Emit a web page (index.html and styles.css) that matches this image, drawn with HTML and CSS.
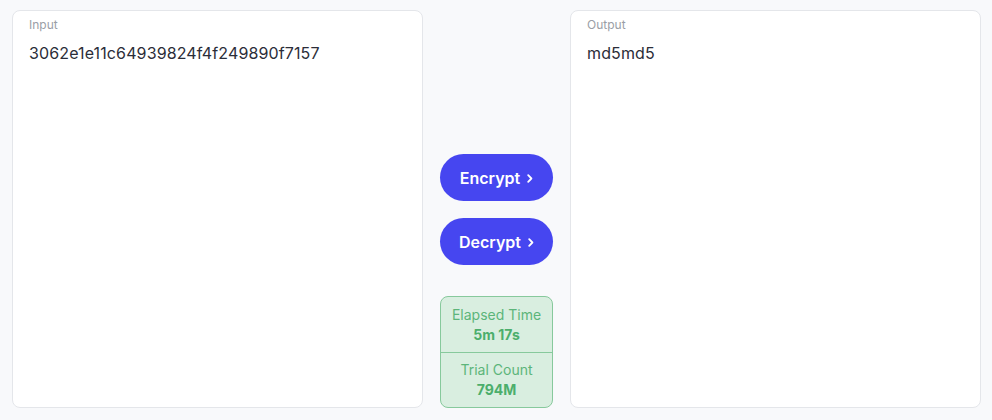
FILE: index.html
```html
<!DOCTYPE html>
<html>
<head>
<meta charset="utf-8">
<link rel="stylesheet" href="styles.css">
</head>
<body>
<div class="app">
  <div class="panel">
    <div class="label">Input</div>
    <div class="value">3062e1e11c64939824f4f249890f7157</div>
  </div>
  <div class="middle">
    <button class="btn">Encrypt<svg class="chev" width="6" height="9" viewBox="0 0 6 9"><path d="M1.2 1.2 L4.4 4.5 L1.2 7.8" fill="none" stroke="#fff" stroke-width="1.8" stroke-linecap="round" stroke-linejoin="round"/></svg></button>
    <button class="btn">Decrypt<svg class="chev" width="6" height="9" viewBox="0 0 6 9"><path d="M1.2 1.2 L4.4 4.5 L1.2 7.8" fill="none" stroke="#fff" stroke-width="1.8" stroke-linecap="round" stroke-linejoin="round"/></svg></button>
    <div class="stats">
      <div class="stat">
        <div class="stat-label">Elapsed Time</div>
        <div class="stat-value">5m 17s</div>
      </div>
      <div class="stat">
        <div class="stat-label">Trial Count</div>
        <div class="stat-value">794M</div>
      </div>
    </div>
  </div>
  <div class="panel">
    <div class="label">Output</div>
    <div class="value">md5md5</div>
  </div>
</div>
</body>
</html>
```
FILE: styles.css
```css
html, body {
  margin: 0;
  padding: 0;
  background: #f8f9fb;
  font-family: "Inter", "Noto Sans", sans-serif;
}
.app {
  display: grid;
  grid-template-columns: 411px 147px 411px;
  height: 398px;
  padding: 10px 11px 12px 12px;
}
.panel {
  background: #ffffff;
  border: 1px solid #e4e6ea;
  border-radius: 8px;
  padding: 6px 16px;
}
.label {
  font-size: 12px;
  color: #9a9ea6;
  line-height: 16px;
}
.value {
  margin-top: 9px;
  font-size: 16px;
  line-height: 22px;
  letter-spacing: 0.12px;
  color: #2b2d38;
}
.middle {
  display: flex;
  flex-direction: column;
  align-items: center;
  justify-content: flex-end;
}
.btn {
  width: 113px;
  height: 47px;
  border: none;
  border-radius: 24px;
  background: #4646f0;
  color: #ffffff;
  font-family: inherit;
  font-size: 16px;
  font-weight: 600;
  margin-bottom: 17px;
  padding: 0;
  display: flex;
  align-items: center;
  justify-content: center;
}
.chev {
  margin-left: 7px;
  margin-top: 1px;
}
.stats {
  margin-top: 14px;
  width: 113px;
  height: 112px;
  box-sizing: border-box;
  border: 1px solid #87c99c;
  border-radius: 8px;
  background: #d9eee0;
  color: #4cae6c;
  display: flex;
  flex-direction: column;
}
.stat {
  flex: 1;
  display: flex;
  flex-direction: column;
  align-items: center;
  justify-content: center;
  font-size: 14px;
  line-height: 20px;
  padding-top: 1px;
}
.stat + .stat {
  border-top: 1px solid #87c99c;
}
.stat-label {
  color: #5cb57a;
}
.stat-value {
  font-weight: 700;
}
```
